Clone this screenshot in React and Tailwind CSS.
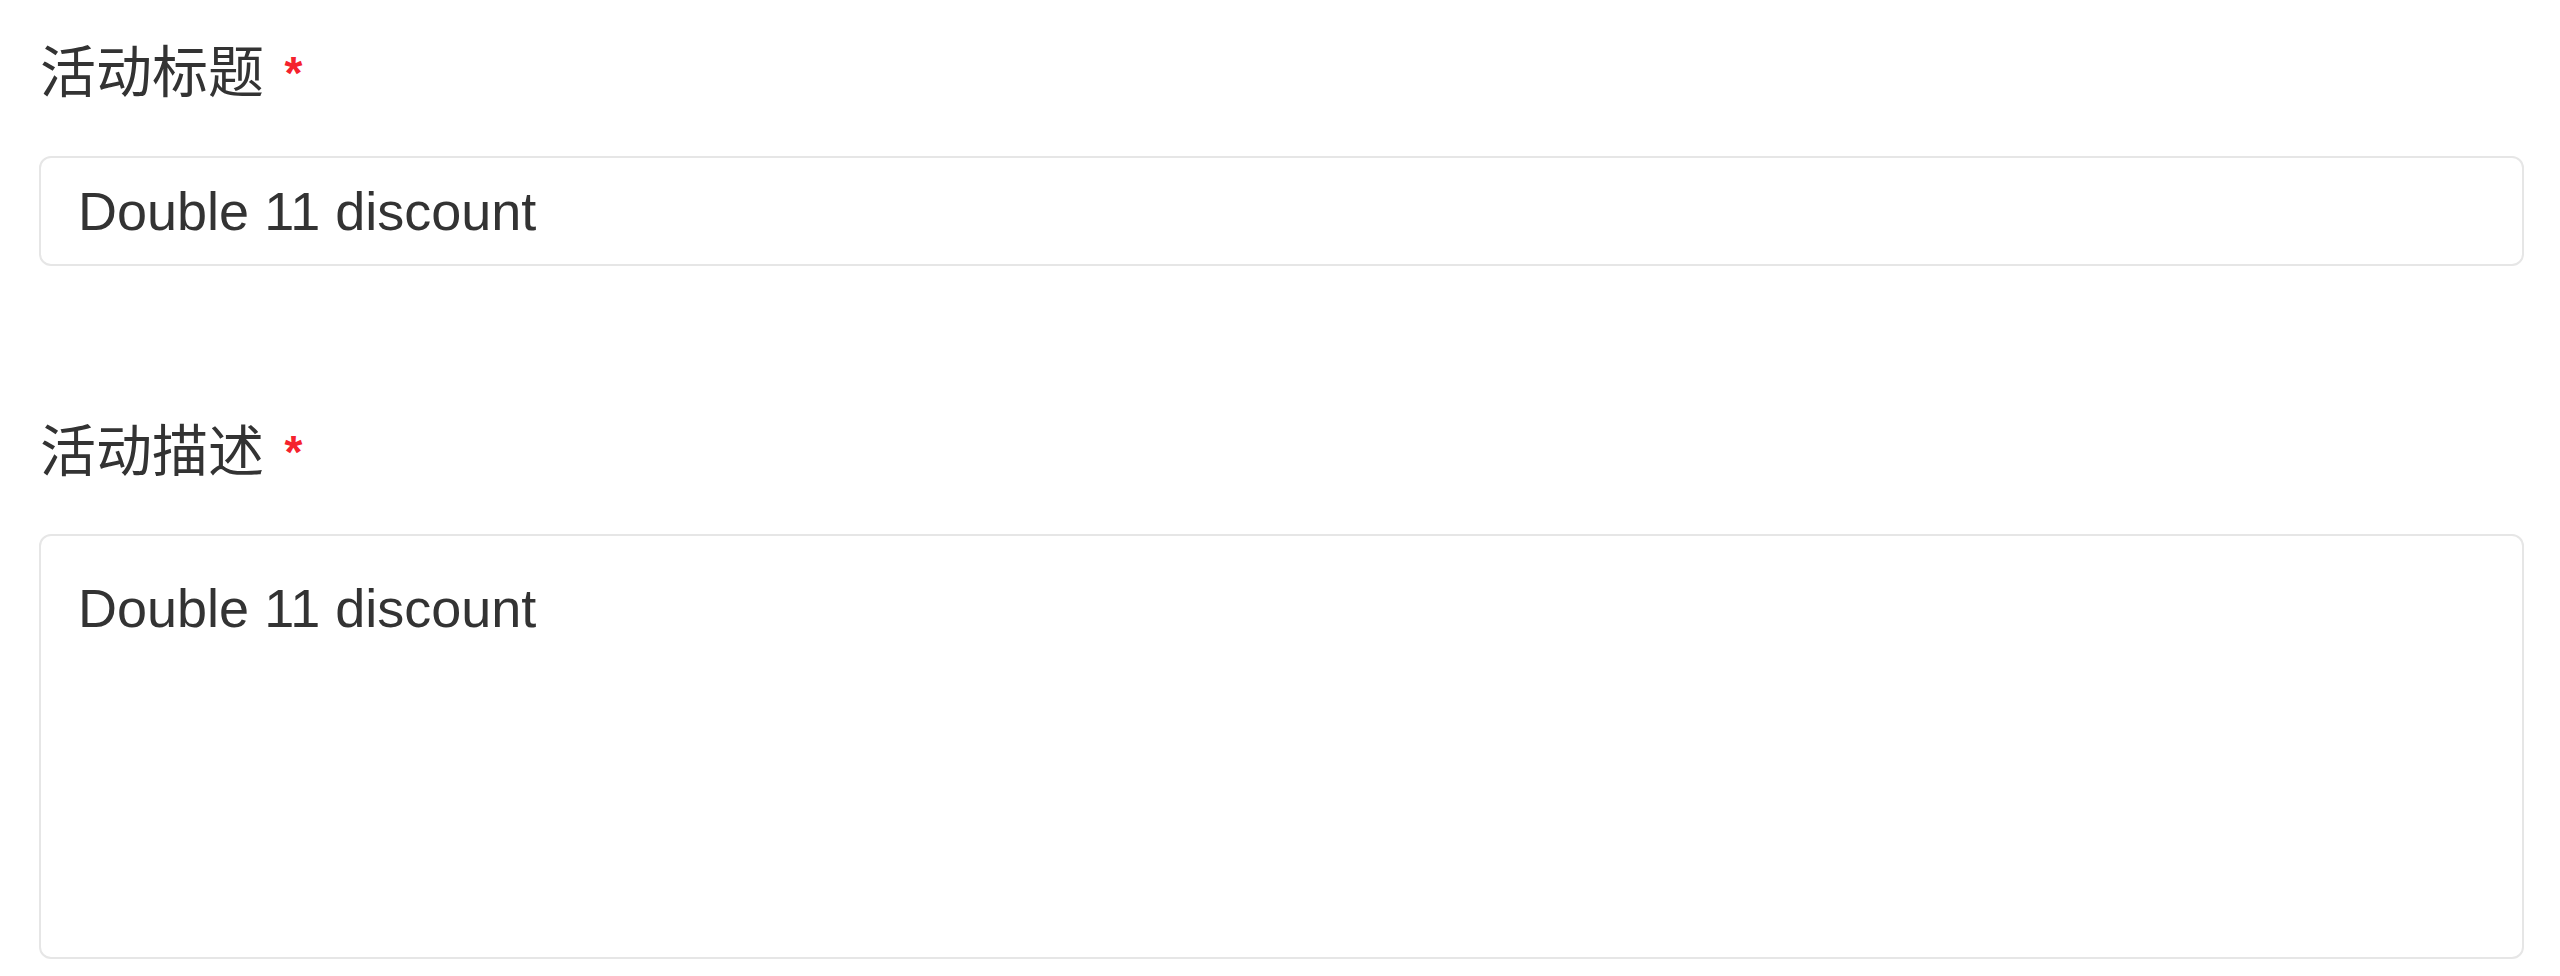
export default function App() {
  const font = { fontFamily: '"Liberation Sans", "Noto Sans CJK SC", sans-serif' };
  return (
    <div className="w-[2560px] h-[976px] bg-white pl-[39px] pr-[36px] pt-[33px]" style={font}>
      <div className="flex flex-col">
        <div className="pl-[1px] text-[56px] leading-[80px] text-[#333333]">
          活动标题 <span className="relative top-[-3px] ml-[5px] text-[46px] font-bold text-[#f5222d]">*</span>
        </div>
        <div className="mt-[40px] h-[110px] border-2 border-[#e6e6e6] rounded-[12px] flex items-center pl-[37px] text-[54px] leading-[106px] text-[#333333]">
          Double 11 discount
        </div>
      </div>
      <div className="flex flex-col mt-[146px]">
        <div className="pl-[1px] text-[56px] leading-[80px] text-[#333333]">
          活动描述 <span className="relative top-[-3px] ml-[5px] text-[46px] font-bold text-[#f5222d]">*</span>
        </div>
        <div className="mt-[39px] h-[425px] border-2 border-[#e6e6e6] rounded-[12px] pl-[37px] pt-[32px] text-[54px] leading-[81px] text-[#333333]">
          Double 11 discount
        </div>
      </div>
    </div>
  );
}
